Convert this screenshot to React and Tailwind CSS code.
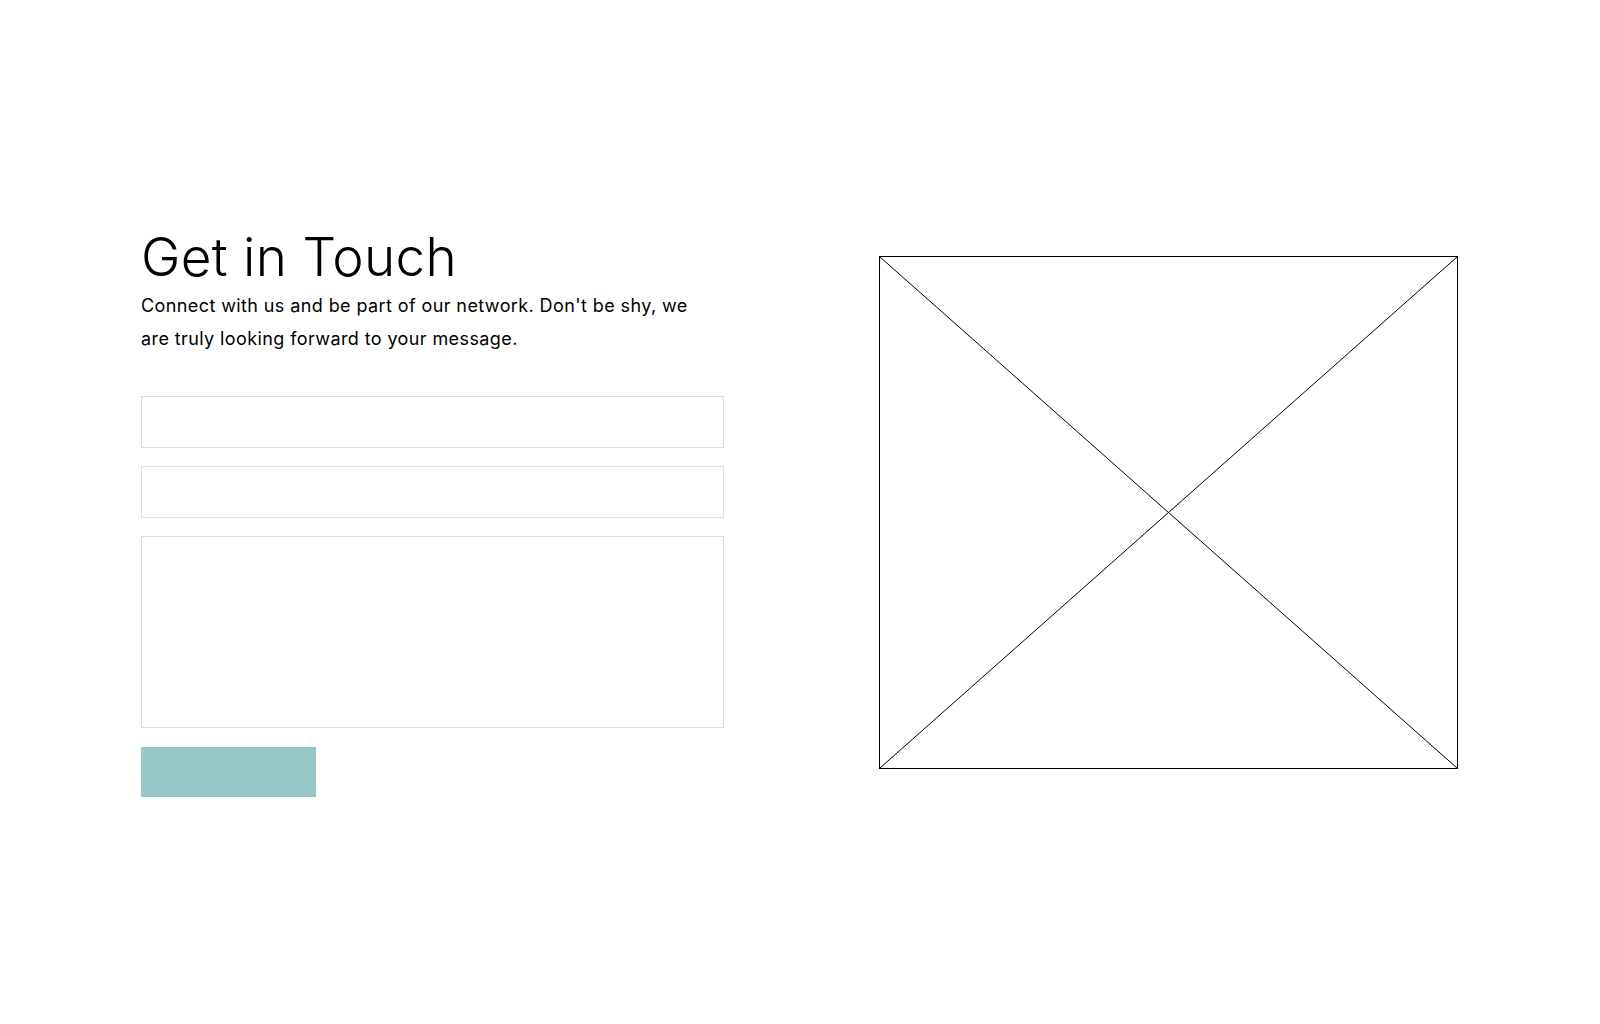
export default function App() {
  return (
    <div className="flex min-h-screen items-center bg-white pl-[141px] pr-[142px] font-['Inter',sans-serif] text-black">
      <div className="flex w-full items-center justify-between">
        <div className="w-[583px]">
          <h1 className="text-[53px] font-light leading-[58px] tracking-[0.3px]">Get in Touch</h1>
          <p className="mt-[3px] w-[570px] text-[18px] leading-[33px] tracking-[0.4px]">
            Connect with us and be part of our network. Don't be shy, we are truly looking forward to your message.
          </p>
          <form className="mt-[41px] flex flex-col gap-[18px]">
            <input type="text" className="h-[52px] w-full border border-[#dcdcdc] px-3 outline-none" />
            <input type="email" className="h-[52px] w-full border border-[#dcdcdc] px-3 outline-none" />
            <textarea className="h-[192px] w-full resize-none border border-[#dcdcdc] p-3 outline-none" />
            <button type="button" className="mt-px h-[50px] w-[175px] bg-[#98c7c8]" />
          </form>
        </div>
        <div className="relative h-[513px] w-[579px] border border-black">
          <svg className="absolute inset-0 h-full w-full" viewBox="0 0 100 100" preserveAspectRatio="none">
            <line x1="0" y1="0" x2="100" y2="100" stroke="black" strokeWidth="1" vectorEffect="non-scaling-stroke" />
            <line x1="100" y1="0" x2="0" y2="100" stroke="black" strokeWidth="1" vectorEffect="non-scaling-stroke" />
          </svg>
        </div>
      </div>
    </div>
  );
}
